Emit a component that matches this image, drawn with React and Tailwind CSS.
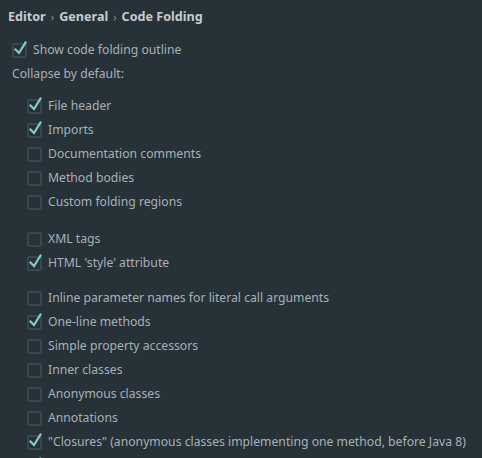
import React from "react";

const Box = ({ checked }) => (
  <span className="relative inline-block w-[15px] h-[15px] rounded-[2px] border-2 border-[#37474f] shrink-0">
    {checked && (
      <svg
        className="absolute left-[0px] top-[-5px] overflow-visible"
        width="14"
        height="16"
        viewBox="0 0 14 16"
        fill="none"
      >
        <path
          d="M1.5 9.5 L5 13 L11.5 2.5"
          stroke="#80cbc4"
          strokeWidth="2.2"
          strokeLinecap="square"
        />
      </svg>
    )}
  </span>
);

const Row = ({ checked, label }) => (
  <div className="flex items-center h-6 pl-[27px] gap-[6px]">
    <Box checked={checked} />
    {label && <span className="whitespace-nowrap">{label}</span>}
  </div>
);

const groups = [
  [
    { c: true, t: "File header" },
    { c: true, t: "Imports" },
    { c: false, t: "Documentation comments" },
    { c: false, t: "Method bodies" },
    { c: false, t: "Custom folding regions" },
  ],
  [
    { c: false, t: "XML tags" },
    { c: true, t: "HTML 'style' attribute" },
  ],
  [
    { c: false, t: "Inline parameter names for literal call arguments" },
    { c: true, t: "One-line methods" },
    { c: false, t: "Simple property accessors" },
    { c: false, t: "Inner classes" },
    { c: false, t: "Anonymous classes" },
    { c: false, t: "Annotations" },
    { c: true, t: "\"Closures\" (anonymous classes implementing one method, before Java 8)" },
    // next row is scrolled past the bottom edge, only its tick peeks in
    { c: true, t: "" },
  ],
];

const gapClass = ["mt-[8px]", "mt-[13px]", "mt-[11px]"];

export default function App() {
  return (
    <div
      className="w-[482px] h-[458px] overflow-hidden bg-[#263238] text-[#a6b1b8] text-[12.2px]"
      style={{ fontFamily: '"Noto Sans", "Open Sans", sans-serif' }}
    >
      <div className="h-[34px] flex items-center pl-[8px] font-bold text-[12.6px] text-[#c4ccd1] gap-[5px]">
        <span>Editor</span>
        <span className="font-normal text-[11px] text-[#8d999f]">›</span>
        <span>General</span>
        <span className="font-normal text-[11px] text-[#8d999f]">›</span>
        <span>Code Folding</span>
      </div>
      <div className="mt-[4px] flex items-center h-6 pl-[12px] gap-[6px]">
        <Box checked />
        <span>Show code folding outline</span>
      </div>
      <div className="flex items-center h-6 pl-[12px]">Collapse by default:</div>
      {groups.map((g, i) => (
        <div key={i} className={gapClass[i]}>
          {g.map((r, j) => (
            <Row key={j} checked={r.c} label={r.t} />
          ))}
        </div>
      ))}
    </div>
  );
}
